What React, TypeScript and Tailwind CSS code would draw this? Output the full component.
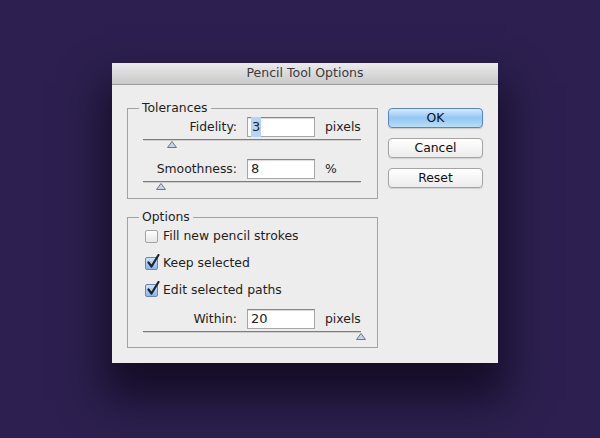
const font = { fontFamily: '"DejaVu Sans", "Liberation Sans", sans-serif' }

function Slider({ pos }: { pos: string }) {
  return (
    <div className="relative h-[9px] w-[218px]">
      <div className="h-px w-full bg-[#7d7d7d]" />
      <div className="h-px w-full bg-[#cfcfcf]" />
      <svg className={`absolute top-[2px] ${pos}`} width="10" height="7" viewBox="0 0 10 7">
        <path d="M5 0.5 L9.5 6.5 L0.5 6.5 Z" fill="#c9d3e6" stroke="#6f7584" strokeWidth="1" />
      </svg>
    </div>
  )
}

function Field({ label, value, unit, selected }: { label: string; value: string; unit: string; selected?: boolean }) {
  return (
    <div className="flex items-center">
      <div className="w-[94px] text-right text-[#1e1e1e]">{label}</div>
      <div className="ml-[10px] flex h-[20px] w-[68px] items-center border border-[#a6a6a6] border-t-[#858585] bg-white pl-[3px] text-[13px] shadow-[inset_0_1px_1px_rgba(0,0,0,0.15)]">
        <span className={selected ? 'bg-[#b4d4f8] px-px text-[#222]' : 'text-[#222]'}>{value}</span>
      </div>
      <div className="ml-[10px] text-[#1e1e1e]">{unit}</div>
    </div>
  )
}

function Check({ checked, label }: { checked: boolean; label: string }) {
  return (
    <div className="flex h-[14px] items-center gap-[5px]">
      <div
        className={
          checked
            ? 'relative h-[13px] w-[13px] rounded-[2px] border border-[#6a86ad] bg-gradient-to-b from-[#cfe3f8] to-[#8cb8e6]'
            : 'h-[13px] w-[13px] rounded-[2px] border border-[#a3a3a3] bg-gradient-to-b from-[#ffffff] to-[#e6e6e6]'
        }
      >
        {checked && (
          <svg className="absolute -top-[4px] left-[1px]" width="13" height="15" viewBox="0 0 13 15">
            <path d="M1.5 8.5 L4.5 12.5 L11.5 1" fill="none" stroke="#1c2433" strokeWidth="2.2" strokeLinecap="round" strokeLinejoin="round" />
          </svg>
        )}
      </div>
      <span className="text-[#1e1e1e]">{label}</span>
    </div>
  )
}

function Button({ label, primary }: { label: string; primary?: boolean }) {
  return (
    <div
      className={
        primary
          ? 'flex h-[20px] w-[95px] items-center justify-center rounded-[4px] border border-[#5785c3] bg-gradient-to-b from-[#d6ebfd] via-[#92c6f2] to-[#b8def9] text-[#111] shadow-[0_1px_1px_rgba(0,0,0,0.15)]'
          : 'flex h-[20px] w-[95px] items-center justify-center rounded-[4px] border border-[#a4a4a4] bg-gradient-to-b from-[#ffffff] to-[#ececec] text-[#111] shadow-[0_1px_1px_rgba(0,0,0,0.12)]'
      }
    >
      {label}
    </div>
  )
}

export default function App() {
  return (
    <div className="h-[438px] w-[600px] overflow-hidden bg-[#2d2050] pl-[112px] pt-[63px] text-[12.4px]" style={font}>
      <div className="flex h-[300px] w-[386px] flex-col bg-[#ededed] shadow-[0_28px_40px_8px_rgba(16,9,32,0.85)]">
        {/* Title bar */}
        <div className="flex h-[22px] items-center justify-center border-b border-[#9a9a9a] bg-gradient-to-b from-[#ebebeb] to-[#c9c9c9] text-[12.5px] text-[#3a3a3a]">
          Pencil Tool Options
        </div>

        <div className="flex flex-1 pl-[15px] pt-[16px]">
          <div className="flex w-[251px] flex-col gap-[11px]">
            {/* Tolerances */}
            <fieldset className="h-[98px] border border-[#a2a2a2] pl-[15px]">
              <legend className="-ml-[4px] px-[3px] leading-[14px] text-[#1e1e1e]">Tolerances</legend>
              <div className="pt-[2px]">
                <Field label="Fidelity:" value="3" unit="pixels" selected />
                <div className="mt-[2px]">
                  <Slider pos="left-[24px]" />
                </div>
                <div className="mt-[11px]">
                  <Field label="Smoothness:" value="8" unit="%" />
                </div>
                <div className="mt-[2px]">
                  <Slider pos="left-[13px]" />
                </div>
              </div>
            </fieldset>

            {/* Options */}
            <fieldset className="h-[138px] border border-[#a2a2a2] pl-[17px]">
              <legend className="-ml-[6px] px-[3px] leading-[14px] text-[#1e1e1e]">Options</legend>
              <div className="flex flex-col gap-[13px] pt-[5px]">
                <Check checked={false} label="Fill new pencil strokes" />
                <Check checked label="Keep selected" />
                <Check checked label="Edit selected paths" />
              </div>
              <div className="-ml-[2px] mt-[12px]">
                <Field label="Within:" value="20" unit="pixels" />
                <div className="mt-[2px]">
                  <Slider pos="left-[213px]" />
                </div>
              </div>
            </fieldset>
          </div>

          {/* Buttons */}
          <div className="ml-[10px] flex flex-col gap-[10px] pt-[7px]">
            <Button label="OK" primary />
            <Button label="Cancel" />
            <Button label="Reset" />
          </div>
        </div>
      </div>
    </div>
  )
}
